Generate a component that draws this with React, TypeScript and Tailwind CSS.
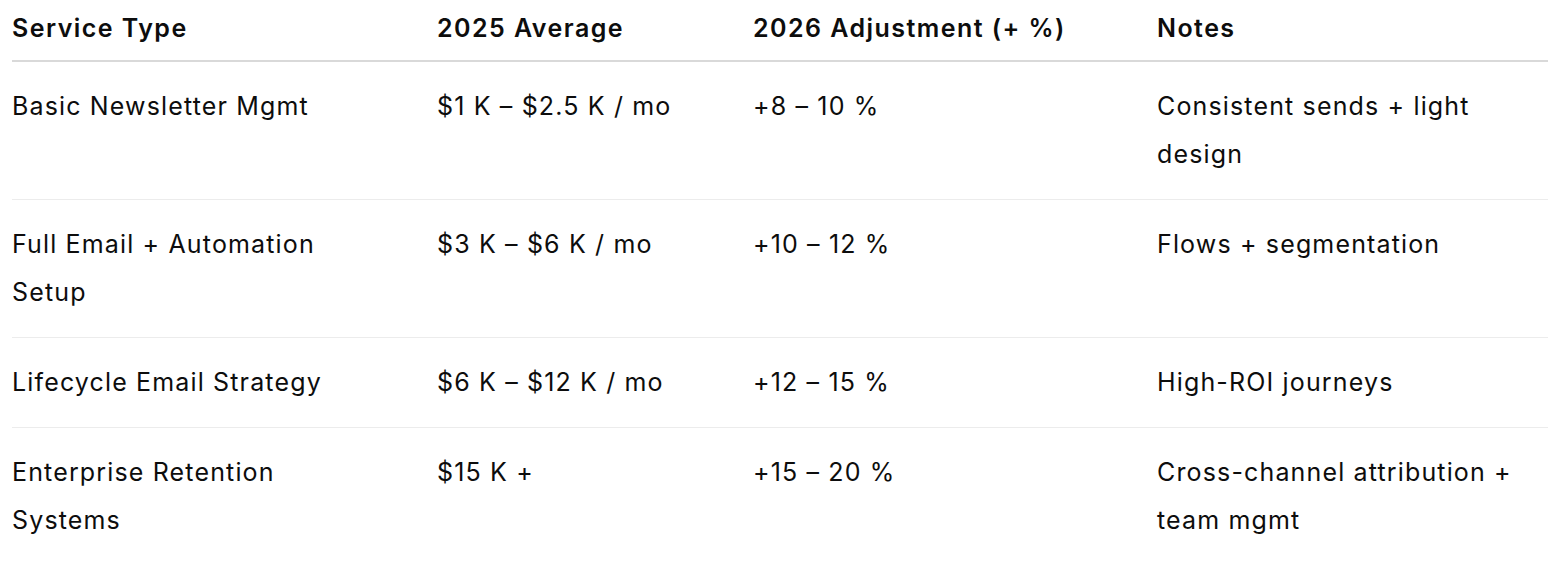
const rows = [
  {
    service: "Basic Newsletter Mgmt",
    average: "$1 K – $2.5 K / mo",
    adjustment: "+8 – 10 %",
    notes: "Consistent sends + light design",
  },
  {
    service: "Full Email + Automation Setup",
    average: "$3 K – $6 K / mo",
    adjustment: "+10 – 12 %",
    notes: "Flows + segmentation",
  },
  {
    service: "Lifecycle Email Strategy",
    average: "$6 K – $12 K / mo",
    adjustment: "+12 – 15 %",
    notes: "High-ROI journeys",
  },
  {
    service: "Enterprise Retention Systems",
    average: "$15 K +",
    adjustment: "+15 – 20 %",
    notes: "Cross-channel attribution + team mgmt",
  },
]

const cols = "grid grid-cols-[425px_316px_404px_391px]"

export default function App() {
  return (
    <div className="min-h-[572px] bg-white pl-3 text-[#0d0d0d] font-['Inter','Liberation_Sans',sans-serif] text-[25px] leading-[48px] tracking-[1.15px]">
      {/* Header */}
      <div className={`${cols} border-b-2 border-[#d9d9d9] pt-1 pb-2 w-[1536px] font-semibold tracking-[1.45px]`}>
        <div className="pr-12">Service Type</div>
        <div className="pr-6">2025 Average</div>
        <div className="pr-6">2026 Adjustment (+ %)</div>
        <div>Notes</div>
      </div>

      {/* Body */}
      {rows.map((row, i) => (
        <div
          key={row.service}
          className={`${cols} w-[1536px] pt-5 pb-[21px] ${i < rows.length - 1 ? "border-b border-[#ececec]" : ""}`}
        >
          <div className="pr-12">{row.service}</div>
          <div className="pr-6">{row.average}</div>
          <div className="pr-6">{row.adjustment}</div>
          <div>{row.notes}</div>
        </div>
      ))}
    </div>
  )
}
